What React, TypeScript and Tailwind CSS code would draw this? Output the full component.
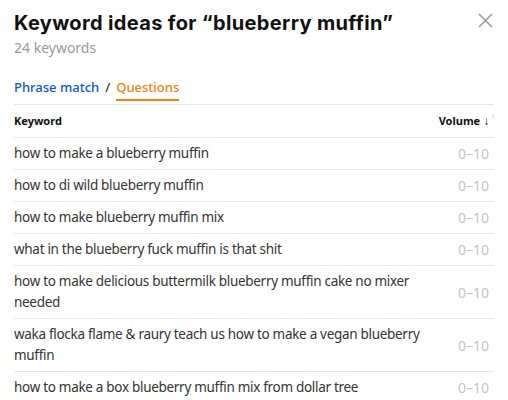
import React from 'react';

const rows: string[] = [
  'how to make a blueberry muffin',
  'how to di wild blueberry muffin',
  'how to make blueberry muffin mix',
  'what in the blueberry fuck muffin is that shit',
  'how to make delicious buttermilk blueberry muffin cake no mixer needed',
  'waka flocka flame & raury teach us how to make a vegan blueberry muffin',
  'how to make a box blueberry muffin mix from dollar tree',
];

const CloseIcon: React.FC = () => (
  <svg width="15" height="15" viewBox="0 0 15 15" fill="none" stroke="#9b9b9b" strokeWidth="1.6">
    <path d="M1 1 L14 14 M14 1 L1 14" />
  </svg>
);

export default function App() {
  return (
    <div className="w-[508px] h-[400px] overflow-hidden bg-white pl-[14px] pr-[14px]" style={{ fontFamily: '"Noto Sans", sans-serif' }}>
      <div className="flex items-start justify-between pt-[10px]">
        <h1 className="text-[20px] leading-[26px] font-bold text-[#111] tracking-[0.35px]" style={{ fontFamily: 'Inter, sans-serif' }}>
          Keyword ideas for “blueberry muffin”
        </h1>
        <button className="mt-[3px] mr-[1px]">
          <CloseIcon />
        </button>
      </div>
      <div className="text-[14px] leading-[20px] text-[#999] mt-[2px]">24 keywords</div>

      <div className="flex items-end gap-[6px] mt-[20px] text-[13px] leading-[18px] font-medium">
        <span className="text-[#0b55d9] pb-[5px]">Phrase match</span>
        <span className="text-[#333] pb-[5px]">/</span>
        <span className="text-[#f5800a] pb-[3px] border-b-2 border-[#f5800a]">Questions</span>
      </div>

      <div className="mt-[3px] border-t border-[#e6e6e6]">
        <div className="flex items-center justify-between h-[33px] border-b border-[#e6e6e6] text-[11px] font-bold text-[#111]">
          <span>Keyword</span>
          <span className="flex items-start">
            <span>Volume</span>
            <span className="ml-[3px] text-[12px] leading-[16px]">↓</span>
            <span className="ml-[3px] text-[7px] leading-[8px] text-[#bbb] font-normal">i</span>
          </span>
        </div>
        {rows.map((r) => (
          <div key={r} className="flex items-center justify-between border-b border-[#e6e6e6] py-[5px]">
            <span className="text-[13.5px] leading-[21px] tracking-[-0.3px] text-[#333] max-w-[410px]">{r}</span>
            <span className="text-[14px] leading-[21px] text-[#c4c4c4] mr-[5px]">0–10</span>
          </div>
        ))}
      </div>
    </div>
  );
}
